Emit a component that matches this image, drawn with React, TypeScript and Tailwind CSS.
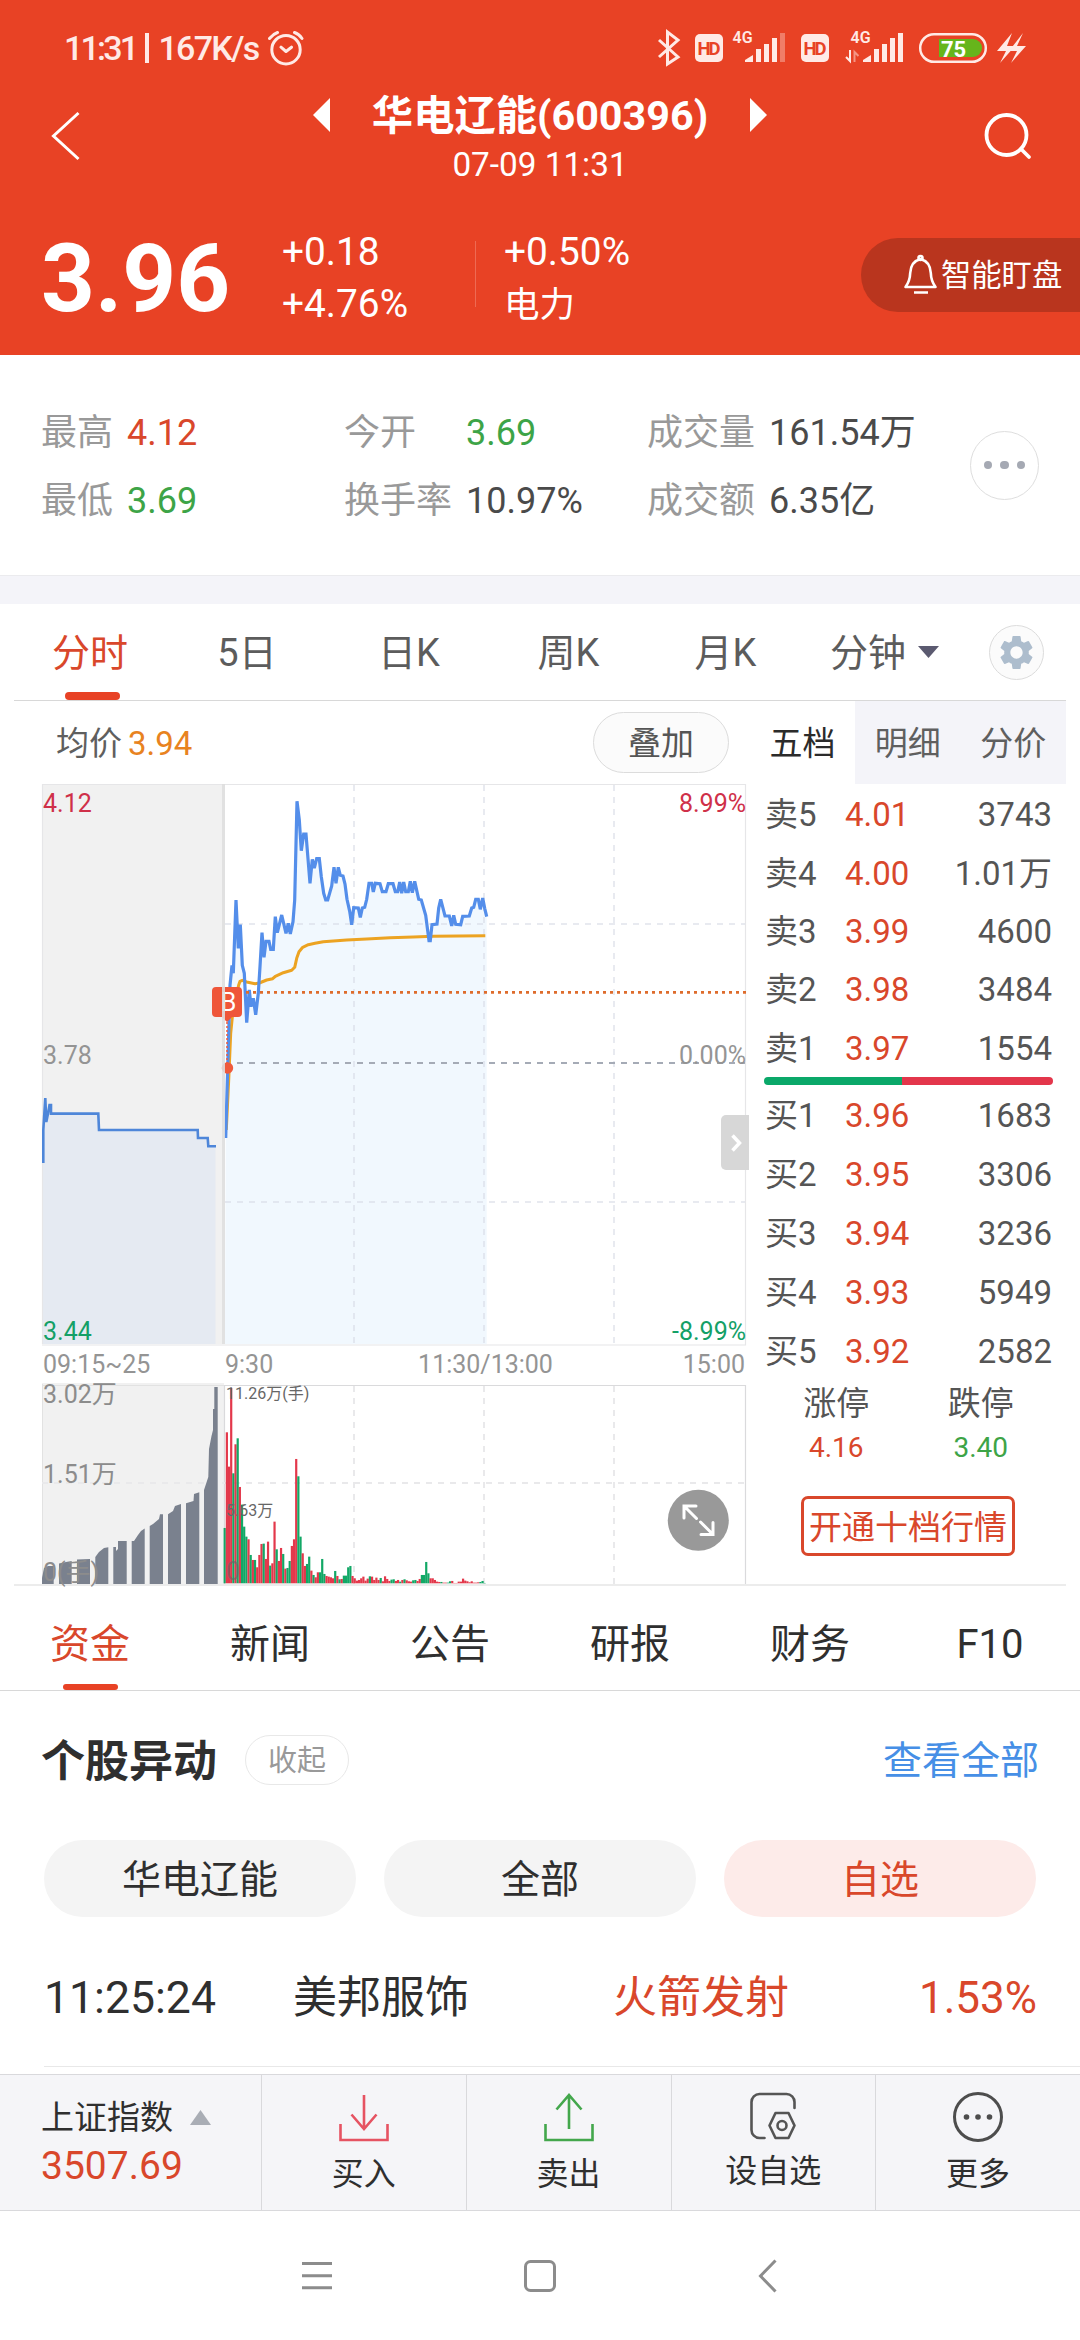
import React from 'react';
import { MdSettings } from 'react-icons/md';
import clsx from 'clsx';

interface OrderLevel {
  label: string;
  price: string;
  volume: string;
}

const SELL_LEVELS: OrderLevel[] = [
  { label: '卖5', price: '4.01', volume: '3743' },
  { label: '卖4', price: '4.00', volume: '1.01万' },
  { label: '卖3', price: '3.99', volume: '4600' },
  { label: '卖2', price: '3.98', volume: '3484' },
  { label: '卖1', price: '3.97', volume: '1554' },
];

const BUY_LEVELS: OrderLevel[] = [
  { label: '买1', price: '3.96', volume: '1683' },
  { label: '买2', price: '3.95', volume: '3306' },
  { label: '买3', price: '3.94', volume: '3236' },
  { label: '买4', price: '3.93', volume: '5949' },
  { label: '买5', price: '3.92', volume: '2582' },
];

const INFO_TABS = ['资金', '新闻', '公告', '研报', '财务', 'F10'];

// Chart points are stored at 3x, relative to (200, 780)
const PRICE: [number, number][] = [
  [77, 1074], [86, 760], [90, 616], [96, 556], [100, 580], [108, 360], [115, 505], [121, 434], [127, 556],
  [133, 580], [140, 728], [148, 630], [153, 680], [160, 655], [167, 704], [175, 640], [180, 560], [186, 458],
  [192, 532], [198, 484], [207, 484], [212, 508], [220, 508], [226, 410], [232, 458], [245, 405], [258, 460],
  [265, 430], [271, 462], [279, 425], [284, 360], [291, 64], [298, 120], [304, 212], [311, 162], [318, 162],
  [330, 310], [337, 238], [343, 264], [350, 236], [358, 236], [364, 290], [371, 340], [377, 360], [383, 360],
  [395, 318], [402, 262], [408, 310], [415, 262], [421, 286], [429, 288], [435, 312], [441, 358], [449, 394],
  [455, 434], [461, 383], [475, 384], [481, 412], [487, 384], [494, 382], [500, 358], [507, 310], [515, 310],
  [520, 336], [526, 310], [540, 311], [547, 335], [558, 335], [565, 311], [579, 311], [586, 335], [593, 335],
  [599, 306], [605, 340], [611, 306], [617, 335], [625, 335], [631, 304], [637, 338], [644, 304], [656, 358],
  [664, 360], [677, 406], [687, 482], [691, 482], [696, 434], [711, 432], [716, 384], [722, 358], [735, 408],
  [748, 408], [755, 438], [761, 406], [767, 433], [782, 434], [788, 409], [808, 408], [815, 384], [821, 382],
  [827, 358], [835, 358], [841, 388], [848, 354], [854, 385], [860, 410],
];

const AVERAGE: [number, number][] = [
  [79, 1050], [86, 900], [92, 760], [98, 700], [108, 650], [116, 615], [120, 604], [127, 601], [140, 606],
  [165, 611], [178, 609], [200, 600], [218, 596], [226, 589], [250, 578], [275, 571], [284, 562], [290, 535],
  [297, 515], [308, 502], [325, 494], [345, 490], [370, 485], [400, 483], [440, 480], [500, 477], [570, 473],
  [640, 471], [700, 469], [856, 467],
];

const toPoints = (pts: [number, number][]) =>
  pts.map(([x, y]) => `${(200 + x / 3).toFixed(1)},${(780 + y / 3).toFixed(1)}`).join(' ');

// One entry per minute: bar height in thirds of a pixel, sign gives the colour (+ red, - green)
const VOLUMES = [
  -166, 453, 350, 586, -330, 417, -435, 289, -236, -170, -140, 132, -85, 70, -70, 48, 85, 118, -119, 73, 125, -53, 60,
  185, -102, 67, 106, -88, 44, -46, -67, 112, 132, 373, -321, -140, 90, 52, -58, -80, 38, -25, 18, 33, -33, -73, -28, 22,
  20, 18, 15, -37, 22, -12, 13, -23, -23, -48, -52, 22, 15, 8, 10, 15, 20, 8, 14, -21, 20, 10, 17, 10, -16, 6, 21, 13, 7,
  -11, -12, 7, 10, -5, 10, -12, 9, 6, 5, -9, -10, 7, 13, -25, -25, -64, -30, 15, 15, 10, 5, 4, -4, 2, 2, -2, -6, 7, 1, 1,
  5, 5, 14, 8, 6, 3, 6, 2, 2, 3, -4, -7, -1,
];

const AUCTION_BARS = [
  '42,1584 42,1578 44,1568 48,1566 53.7,1566 53.7,1584',
  '59,1584 59,1563.5 66,1562 71.7,1561 71.7,1584',
  '77,1584 77,1559.5 90,1559 90,1584',
  '95.3,1584 95.3,1557 99,1552 104,1548 108.3,1547.3 108.3,1584',
  '113.3,1584 113.3,1547 116,1547 116,1551 118,1549 118,1541 126.7,1541 126.7,1584',
  '131.7,1584 131.7,1541 134,1541 138,1535 141,1531 144.7,1528.5 144.7,1584',
  '149.7,1584 149.7,1526 153,1524 159,1519 160,1514.3 163,1514.3 163,1584',
  '168,1584 168,1514.3 173,1511 175,1506 181,1504 181,1584',
  '186,1584 186,1503.3 193.5,1501 194,1494 199.3,1492.3 199.3,1584',
  '204,1584 204,1490 208.3,1477 209,1449 211.5,1436 213,1430 213,1409 214.3,1409 214.3,1387 217.7,1387 217.7,1584',
];

const StatusBar = () => (
  <div className="flex h-[86px] items-center pt-[10px] pl-[64px] text-[#ffeae6]">
    <div className="flex w-[203px] items-center text-[34px] leading-none font-medium whitespace-nowrap">
      <span className="w-[81px] tracking-[-2.8px]">11:31</span>
      <i className="h-[30px] w-[3.5px] bg-[#ffeae6]" />
      <span className="ml-[10px] tracking-[-1.7px]">167K/s</span>
    </div>
    <svg width="37" height="36" viewBox="0 0 37 36" fill="none" stroke="currentColor" strokeWidth="3" strokeLinecap="round" strokeLinejoin="round">
      <circle cx="19" cy="19.700" r="14.200" />
      <path d="M2.500 8.500C5 5.500 7.500 3.500 10.500 2.500M27.500 2.500C30.500 3.500 33 5.500 35 8.500M14 17.200l5 4.300 5.500-4.300" />
    </svg>
    <svg className="ml-[346px]" width="390" height="40" viewBox="650 28 390 40" fill="currentColor">
      <path d="M659 40l19 17-10.500 7V32L678 40l-19 17" fill="none" stroke="currentColor" strokeWidth="3" />
      {[695, 801].map((x) => (
        <g key={x}>
          <rect x={x} y="34" width="28" height="28" rx="5" />
          <text x={x + 14} y="55" textAnchor="middle" fontSize="18.5" fontWeight="700" fill="#e84225" textLength="23">
            HD
          </text>
        </g>
      ))}
      <text x="732.500" y="43" fontSize="16" fontWeight="600">4G</text>
      <text x="850.500" y="43" fontSize="16" fontWeight="600">4G</text>
      {[745, 863].map((x) => (
        <g key={x}>
          <path d={`M${x} 62v-2l8-5v7z`} />
          <rect x={x + 11} y="49" width="5" height="13" />
          <rect x={x + 19} y="44" width="5" height="18" />
          <rect x={x + 27} y="38" width="5" height="24" />
          <rect x={x + 35} y="33" width="5" height="29" opacity={x === 745 ? 0.35 : 1} />
        </g>
      ))}
      <path d="M850 50v11l-4-4" fill="none" stroke="currentColor" strokeWidth="2" />
      <path d="M854.500 62V52l4 4" fill="none" stroke="currentColor" strokeWidth="2" opacity=".5" />
      <rect x="920.200" y="34.200" width="65.600" height="27.600" rx="13.800" fill="none" stroke="currentColor" strokeWidth="2.500" />
      <path d="M939 39h34a9 9 0 0 1 0 18h-34z" fill="#66b51b" />
      <text x="941" y="57" fontSize="22" fontWeight="700" fill="#fff">75</text>
      <path d="M1012 33l-15 18h9l-6 12 15-17h-8zM1023 33l-14 18h8l-6 12 15-17h-9z" />
    </svg>
  </div>
);

const Header = () => (
  <header className="h-[355px] overflow-hidden bg-[#e84225] text-white">
    <StatusBar />
    <div className="flex h-[100px] items-center justify-between pr-[48px] pl-[50px]">
      <svg width="46" height="50" viewBox="0 0 46 50" fill="none" stroke="currentColor" strokeWidth="3">
        <path d="M28.500 2L3.500 25l25 23" />
      </svg>
      <div className="flex w-[454px] flex-col">
        <div className="flex h-[58px] items-center justify-between">
          <svg width="17" height="34" viewBox="0 0 17 34" fill="currentColor">
            <path d="M17 0v34L0 17z" />
          </svg>
          <h1 className="pt-[3px] text-[41.3px] leading-none font-bold">华电辽能(600396)</h1>
          <svg width="17" height="34" viewBox="0 0 17 34" fill="currentColor">
            <path d="M0 0v34l17-17z" />
          </svg>
        </div>
        <div className="flex h-[42px] items-center justify-center text-[33.3px] leading-none">07-09 11:31</div>
      </div>
      <svg width="48" height="48" viewBox="983 112 48 48" fill="none" stroke="currentColor" strokeWidth="3.800" strokeLinecap="round">
        <circle cx="1005.500" cy="135" r="20" />
        <path d="M1020 149l8 8" />
      </svg>
    </div>
    <div className="flex items-start pt-[40px] pl-[41px]">
      <div className="flex h-[106px] w-[241px] items-center text-[94px] leading-none font-bold">3.96</div>
      <div className="w-[193px] text-[38.8px] leading-[52px]">
        <div>+0.18</div>
        <div>+4.76%</div>
      </div>
      <div className="mt-[15px] h-[66px] w-px bg-[#ee6a53]" />
      <div className="ml-[28px] w-[357px] text-[38.8px] leading-[52px]">
        <div>+0.50%</div>
        <div className="text-[35.500px] leading-[54px]">电力</div>
      </div>
      <button className="mt-[12px] flex h-[74px] w-[219px] items-center rounded-l-full bg-[#b9351e] pl-[41px] text-[30.3px] leading-none">
        <svg width="39" height="42" viewBox="0 0 39 42" fill="none" stroke="currentColor" strokeWidth="2.600" strokeLinejoin="round">
          <path d="M18.500 5C11 7 8.500 13 8.200 19 8 26 6.500 29 3.500 33h30c-3-4-4.500-7-4.700-14C28.500 13 26 7 18.500 5zM12 38.500h14" />
          <circle cx="18.500" cy="4" r="2" />
        </svg>
        <span className="pt-[2px] whitespace-nowrap">智能盯盘</span>
      </button>
    </div>
  </header>
);

const Stat = ({ label, value, labelClass, valueClass }: { label: string; value: string; labelClass: string; valueClass: string }) => (
  <div className="flex h-[68px] items-center text-[36px] leading-none whitespace-nowrap">
    <span className={clsx('text-[#999]', labelClass)}>{label}</span>
    <span className={valueClass}>{value}</span>
  </div>
);

const Stats = () => (
  <section className="flex h-[220px] items-center pl-[41px]">
    <div className="grid w-[929px] grid-cols-[303px_303px_1fr] pt-[3px]">
      <Stat label="最高" value="4.12" labelClass="w-[86px]" valueClass="text-[#d9472b]" />
      <Stat label="今开" value="3.69" labelClass="w-[122px]" valueClass="text-[#3da447]" />
      <Stat label="成交量" value="161.54万" labelClass="w-[122px]" valueClass="text-[#4a4a4a]" />
      <Stat label="最低" value="3.69" labelClass="w-[86px]" valueClass="text-[#3da447]" />
      <Stat label="换手率" value="10.97%" labelClass="w-[122px]" valueClass="text-[#4a4a4a]" />
      <Stat label="成交额" value="6.35亿" labelClass="w-[122px]" valueClass="text-[#4a4a4a]" />
    </div>
    <button className="flex size-[69px] items-center justify-center gap-[8px] rounded-full border-[1.5px] border-[#dedede]">
      <i className="size-[8.5px] rounded-full bg-[#a5a9b3]" />
      <i className="size-[8.5px] rounded-full bg-[#a5a9b3]" />
      <i className="size-[8.5px] rounded-full bg-[#a5a9b3]" />
    </button>
  </section>
);

const PeriodTabs = () => (
  <nav className="mx-[14px] flex h-[97px] items-center border-b border-[#d8d8d8] text-[38px] leading-none text-[#5c5c5c]">
    <div className="flex h-full w-[152px] flex-col items-center justify-end text-[#d9472b]">
      <span className="mb-[20px]">分时</span>
      <i className="ml-[4px] h-[8px] w-[55px] rounded-[4px] bg-[#e84225]" />
    </div>
    <span className="w-[162px] pt-[2px] text-center">5日</span>
    <span className="w-[162px] pt-[2px] text-center">日K</span>
    <span className="w-[157px] pt-[2px] text-center">周K</span>
    <span className="w-[157px] pt-[2px] text-center">月K</span>
    <span className="ml-[26px] pt-[2px]">分钟</span>
    <svg className="ml-[12px]" width="21" height="12" viewBox="0 0 21 12">
      <path d="M0 0h21L10.500 12z" fill="#5b5a70" />
    </svg>
    <button className="ml-[50px] flex size-[55px] items-center justify-center rounded-full border-[1.5px] border-[#dcdcdc] bg-[#fbfbfb]">
      <MdSettings className="size-[41px] shrink-0 text-[#adbdcd]" />
    </button>
  </nav>
);

const Chart = () => (
  <svg className="block overflow-visible" width="736" height="800" viewBox="14 784 736 800">
    {/* call auction background */}
    <rect x="42" y="784" width="180" height="560" fill="#f1f1f1" />
    <path
      d="M43 1344V1132l2-34 1.500 26 3-20 1.500 9.600h47.500l.5 16.500h98.500v8h10.500l.5 8.500h7V1344z"
      fill="#e5eaf2"
    />
    <polygon points={`${toPoints(PRICE)} 486.7,1344 225,1344`} fill="#f1f8fe" />

    {/* frame and grid */}
    <path d="M42.500 1344V784.500H745.500V1345H42" fill="none" stroke="#e6e6e8" strokeWidth="1.200" />
    <g fill="none" stroke="#d9dce6" strokeOpacity=".6" strokeWidth="2" strokeDasharray="6 6">
      <path d="M354 785V1344M484 785V1344M614 785V1344" />
      <path d="M225 924H745M225 1202H745" />
    </g>
    <path d="M237 1063H745" stroke="#a5abb6" strokeWidth="1.800" strokeDasharray="6 6" />

    <polyline
      points="43.300,1163 43.300,1130 45.300,1098 46.300,1122 48,1113.600 49.500,1105 51,1105 51,1113.600 98.300,1113.600 99,1130 197.700,1130 198,1138 207.700,1138 208.300,1146.300 216,1146.300"
      fill="none"
      stroke="#4e86d9"
      strokeWidth="2.600"
    />
    <polyline points={toPoints(AVERAGE)} fill="none" stroke="#eca322" strokeWidth="3" strokeLinejoin="round" />
    <polyline points={toPoints(PRICE)} fill="none" stroke="#548eea" strokeWidth="3.200" />
    <path d="M246 993.500H746" stroke="#de6c2c" strokeWidth="2.800" strokeDasharray="3 4" transform="translate(0 -1.200)" />

    {/* buy marker */}
    <path d="M227 1022V1068" stroke="#ef5a3c" strokeWidth="1.500" strokeDasharray="2 2" />
    <path d="M216 987h22a4 4 0 0 1 4 4v22a4 4 0 0 1-4 4h-6l-5 5-5-5h-6a4 4 0 0 1-4-4v-22a4 4 0 0 1 4-4z" fill="#ef5639" />
    <text x="228.500" y="1011" fontSize="25" textAnchor="middle" fill="#fff">B</text>
    <circle cx="227.500" cy="1068" r="5.700" fill="#ef5a3c" />
    <rect x="222" y="784" width="3" height="560" fill="#dedede" fillOpacity=".9" />

    <g fontSize="25">
      <text x="43" y="811.500" fill="#cf3049">4.12</text>
      <text x="43" y="1064" fill="#949494">3.78</text>
      <text x="43" y="1340" fill="#14a067">3.44</text>
      <text x="746" y="811.500" fill="#cf3049" textAnchor="end">8.99%</text>
      <text x="746" y="1064" fill="#949494" textAnchor="end">0.00%</text>
      <text x="746" y="1340" fill="#14a067" textAnchor="end">-8.99%</text>
      <g fill="#949494">
        <text x="43" y="1372.500">09:15~25</text>
        <text x="225" y="1372.500">9:30</text>
        <text x="485.500" y="1372.500" textAnchor="middle">11:30/13:00</text>
        <text x="745" y="1372.500" textAnchor="end">15:00</text>
      </g>
    </g>

    <path d="M749 1115v55h-23a5 5 0 0 1-5-5v-45a5 5 0 0 1 5-5z" fill="#d7d7d7" />
    <path d="M732.500 1135.500l7 7.500-7 7.500" fill="none" stroke="#fff" strokeWidth="3.500" />

    {/* volume */}
    <rect x="42" y="1383" width="182" height="201" fill="#f1f1f1" />
    <path d="M224.500 1584V1385.500H745.500V1584" fill="none" stroke="#dadadc" strokeWidth="1.200" />
    <path d="M42.500 1384V1584M42 1385.500H224" stroke="#e2e2e2" strokeWidth="1" />
    <path
      d="M42 1483H745M354 1386V1584M484 1386V1584M614 1386V1584"
      fill="none"
      stroke="#e9e9eb"
      strokeWidth="2"
      strokeDasharray="6 6"
    />
    {AUCTION_BARS.map((points) => (
      <polygon key={points} points={points} fill="#7a818e" />
    ))}
    {VOLUMES.map((v, i) => (
      <rect
        key={i}
        x={223.6 + i * 2.167}
        y={1583.3 - Math.abs(v) / 3}
        width="2.200"
        height={Math.abs(v) / 3}
        fill={v > 0 ? '#e3384b' : '#12a866'}
      />
    ))}
    <g fill="#8c8c8c" fontSize="25">
      <text x="43" y="1402.500">3.02万</text>
      <text x="43" y="1483">1.51万</text>
      <text x="43" y="1581">0(手)</text>
      <text x="226" y="1580" fill="#666" fillOpacity=".6">0</text>
    </g>
    <g fill="#666" fontSize="16">
      <text x="226" y="1399">11.26万(手)</text>
      <text x="226" y="1516">5.63万</text>
    </g>

    {/* fullscreen toggle */}
    <circle cx="698.300" cy="1520.300" r="30.500" fill="#999" />
    <path
      d="M684 1518v-12h12M684.500 1506.500l12 12M713 1522.500v12h-12M712.500 1534l-12-12"
      fill="none"
      stroke="#fff"
      strokeWidth="3"
      strokeLinecap="round"
    />
  </svg>
);

const OrderRow = ({ level, className }: { level: OrderLevel; className: string }) => (
  <div className={clsx('flex items-center text-[33px] leading-none text-[#555]', className)}>
    <span className="w-[80px]">{level.label}</span>
    <span className="text-[#d9472b]">{level.price}</span>
    <span className="ml-auto">{level.volume}</span>
  </div>
);

const OrderBook = () => (
  <aside className="w-[316px]">
    <div className="flex h-[83px] items-center text-[33px] leading-none text-[#5f5f5f]">
      <span className="w-[105px] pt-[2px] text-center text-[#2b2b2b]">五档</span>
      <div className="flex h-full flex-1 items-center bg-[#f4f4f9] pt-[2px]">
        <span className="flex-1 text-center">明细</span>
        <span className="flex-1 text-center">分价</span>
      </div>
    </div>
    <div className="mr-[13px] ml-[14px] pt-px">
      <div className="pr-px pl-px">
        {SELL_LEVELS.map((level) => (
          <OrderRow key={level.label} level={level} className="h-[58.4px] pt-px" />
        ))}
      </div>
      <div className="flex h-[8px] overflow-hidden rounded-full">
        <i className="w-[138px] bg-[#0aa869]" />
        <i className="flex-1 bg-[#e3364b]" />
      </div>
      <div className="px-px pt-px">
        {BUY_LEVELS.map((level) => (
          <OrderRow key={level.label} level={level} className="h-[59.1px]" />
        ))}
      </div>
      <div className="grid grid-cols-2 pt-px text-center text-[33px] text-[#555]">
        <span className="leading-[43px]">涨停</span>
        <span className="leading-[43px]">跌停</span>
        <span className="text-[28px] leading-[46px] text-[#d9472b]">4.16</span>
        <span className="text-[28px] leading-[46px] text-[#3da447]">3.40</span>
      </div>
      <button className="mt-[25px] ml-[37px] flex h-[60px] w-[214px] items-center justify-center rounded-[7px] border-[3px] border-[#d9472b] pt-[2px] text-[33px] leading-none whitespace-nowrap text-[#d9472b]">
        开通十档行情
      </button>
    </div>
  </aside>
);

const Quotes = () => (
  <section className="mx-[14px] flex h-[885px] border-b-2 border-[#ececec]">
    <div className="w-[736px]">
      <div className="flex h-[83px] items-center pr-[21px] pl-[42px] text-[33px] leading-none">
        <span className="pt-[2px] text-[#5f5f5f]">均价</span>
        <span className="ml-[6px] pt-[2px] text-[#e8831f]">3.94</span>
        <button className="ml-auto flex h-[61px] w-[136px] items-center justify-center rounded-full border-[1.5px] border-[#dcdcdc] bg-[#fbfbfb] pt-[2px] text-[#555]">
          叠加
        </button>
      </div>
      <Chart />
    </div>
    <OrderBook />
  </section>
);

const InfoTabs = () => (
  <nav className="grid h-[105px] grid-cols-6 border-b border-[#d8d8d8] text-[40px] leading-none text-[#2f2f2f]">
    {INFO_TABS.map((tab, i) => (
      <div key={tab} className={clsx('flex flex-col items-center justify-between pt-[39px]', i === 0 && 'text-[#d9472b]')}>
        <span>{tab}</span>
        {i === 0 && <i className="h-[6px] w-[55px] rounded-[3px] bg-[#e84225]" />}
      </div>
    ))}
  </nav>
);

const Movements = () => (
  <section className="h-[383px]">
    <div className="flex h-[138px] items-center pr-[41px] pl-[41px] leading-none">
      <h2 className="pt-[3px] text-[44px] font-bold text-[#2f2f2f]">个股异动</h2>
      <button className="ml-[28px] flex h-[50px] w-[104px] items-center justify-center rounded-full border-[1.5px] border-[#e8e8e8] pt-[2px] text-[29px] text-[#999]">
        收起
      </button>
      <a className="ml-auto pt-[3px] text-[39px] text-[#468fe6]">查看全部</a>
    </div>
    <div className="mx-[44px] mt-[11px] grid h-[77px] grid-cols-3 gap-[28px] text-[39px] leading-none text-[#2f2f2f]">
      <button className="rounded-full bg-[#f4f4f4] pt-[4px]">华电辽能</button>
      <button className="rounded-full bg-[#f4f4f4] pt-[4px]">全部</button>
      <button className="rounded-full bg-[#fdebe9] pt-[4px] text-[#d9472b]">自选</button>
    </div>
    <div className="ml-[44px] flex h-[150px] items-center border-b border-[#e8e8e8] pt-[13px] pr-[43px] text-[44px] leading-none text-[#2f2f2f]">
      <span className="w-[249px] text-[44.6px]">11:25:24</span>
      <span className="w-[320px]">美邦服饰</span>
      <span className="text-[#d9472b]">火箭发射</span>
      <span className="ml-auto text-[#d9472b]">1.53%</span>
    </div>
  </section>
);

const Action = ({ label, last, children }: { label: string; last?: boolean; children: React.ReactNode }) => (
  <button className={clsx('flex flex-1 flex-col items-center pt-[16px] text-[32px] leading-none', !last && 'border-r border-[#d9d9dc]')}>
    <svg width="54" height="54" viewBox="0 0 54 54" fill="none" strokeWidth="2.600">
      {children}
    </svg>
    <span className={clsx(label.length > 2 ? 'mt-[10px]' : 'mt-[13px]')}>{label}</span>
  </button>
);

const BottomBar = () => (
  <footer className="flex h-[137px] border-y border-[#d9d9dc] bg-[#f5f5f8] text-[#2f2f2f]">
    <div className="w-[262px] border-r border-[#d9d9dc] pl-[41px]">
      <div className="flex h-[50px] items-center pt-[34px] text-[33px] leading-none">
        上证指数
        <svg className="ml-[17px]" width="21" height="15" viewBox="0 0 21 15">
          <path d="M10.500 0L21 15H0z" fill="#a9adb5" />
        </svg>
      </div>
      <div className="mt-[22px] text-[39px] leading-none text-[#d9472b]">3507.69</div>
    </div>
    <Action label="买入">
      <path d="M27 4v34M14.500 23.500L27 38l12.500-14.500M3.500 33v16h47V33" stroke="#e65362" />
    </Action>
    <Action label="卖出">
      <path d="M27 38V4M14.500 18.500L27 4l12.500 14.500M3.500 33v16h47V33" stroke="#43a74c" />
    </Action>
    <Action label="设自选">
      <g stroke="#555" strokeLinecap="round" strokeLinejoin="round">
        <path d="M48.500 17v-6a8 8 0 0 0-8-8h-27a8 8 0 0 0-8 8v28a8 8 0 0 0 8 8h5" />
        <path d="M29.500 22h13l6 12.500-6 12.500h-13l-6-12.500z" />
        <circle cx="36" cy="34.500" r="4.500" />
      </g>
    </Action>
    <Action label="更多" last>
      <circle cx="27" cy="26" r="23.500" stroke="#4d4d4d" strokeWidth="3" />
      <g fill="#4d4d4d">
        <circle cx="15.500" cy="26" r="2.800" />
        <circle cx="27" cy="26" r="2.800" />
        <circle cx="38.500" cy="26" r="2.800" />
      </g>
    </Action>
  </footer>
);

const SystemNav = () => (
  <div className="flex h-[129px] items-center justify-center">
    <svg width="480" height="36" viewBox="300 2257 480 36" fill="none" stroke="#8c8c8c" strokeWidth="3">
      <path d="M302 2262.500h30M302 2274.700h30M302 2286.700h30" />
      <rect x="525.500" y="2260.500" width="29" height="29" rx="5" />
      <path d="M775.500 2259.500l-15 15.500 15 15.500" />
    </svg>
  </div>
);

export default function App() {
  return (
    <div className="h-[2340px] w-[1080px] overflow-hidden bg-white font-[Roboto,'Noto_Sans_CJK_SC',sans-serif]">
      <Header />
      <Stats />
      <div className="h-[29px] border-t border-[#ebebee] bg-[#f4f4f9]" />
      <PeriodTabs />
      <Quotes />
      <InfoTabs />
      <Movements />
      <BottomBar />
      <SystemNav />
    </div>
  );
}
